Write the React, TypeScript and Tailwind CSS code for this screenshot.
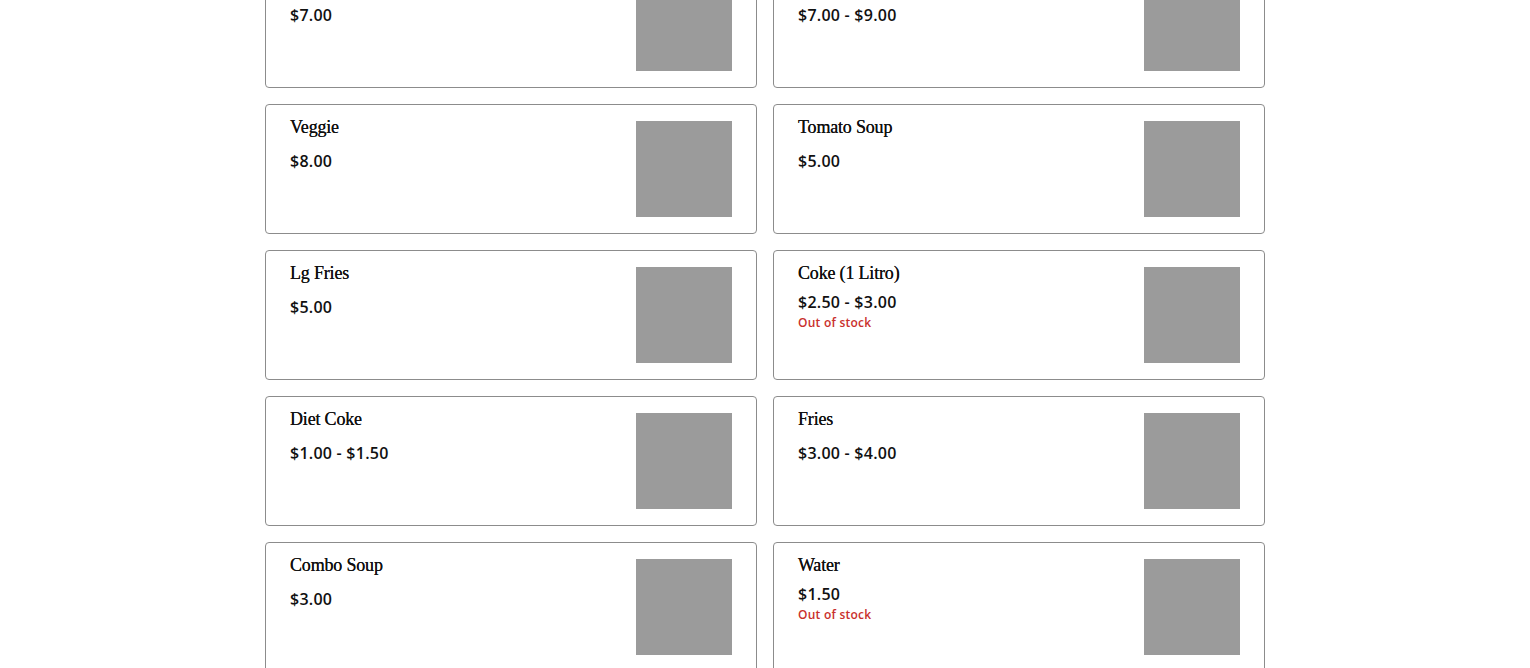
type Item = { name: string; price: string; outOfStock?: boolean }

const items: Item[] = [
  { name: 'Burger', price: '$7.00' },
  { name: 'Pizza', price: '$7.00 - $9.00' },
  { name: 'Veggie', price: '$8.00' },
  { name: 'Tomato Soup', price: '$5.00' },
  { name: 'Lg Fries', price: '$5.00' },
  { name: 'Coke (1 Litro)', price: '$2.50 - $3.00', outOfStock: true },
  { name: 'Diet Coke', price: '$1.00 - $1.50' },
  { name: 'Fries', price: '$3.00 - $4.00' },
  { name: 'Combo Soup', price: '$3.00' },
  { name: 'Water', price: '$1.50', outOfStock: true },
]

const MenuCard = ({ item }: { item: Item }) => (
  <div className="flex h-[130px] justify-between rounded-[4px] border border-[#8c8c8c] bg-white px-6 py-4">
    <div className="flex flex-col">
      <h3 className="-mt-1 text-[18px] leading-5 tracking-[-0.01em] text-[#111] font-['Liberation_Serif',serif] [text-shadow:0_0_0.3px_#111]">
        {item.name}
      </h3>
      <p
        className={`${item.outOfStock ? 'mt-[9px]' : 'mt-[14px]'} text-[16px] leading-5 font-semibold tracking-[0.015em] text-[#111] font-['Open_Sans',sans-serif]`}
      >
        {item.price}
      </p>
      {item.outOfStock && (
        <p className="mt-[3px] text-[12px] leading-4 font-semibold tracking-[0.02em] text-[#c9302c] font-['Open_Sans',sans-serif]">
          Out of stock
        </p>
      )}
    </div>
    <div className="h-24 w-24 shrink-0 bg-[#9b9b9b]" />
  </div>
)

export default function App() {
  return (
    <div className="h-[668px] overflow-hidden bg-white">
      <div className="mx-auto -mt-[42px] grid w-[1000px] grid-cols-2 gap-4">
        {items.map((item) => (
          <MenuCard key={item.name} item={item} />
        ))}
      </div>
    </div>
  )
}
